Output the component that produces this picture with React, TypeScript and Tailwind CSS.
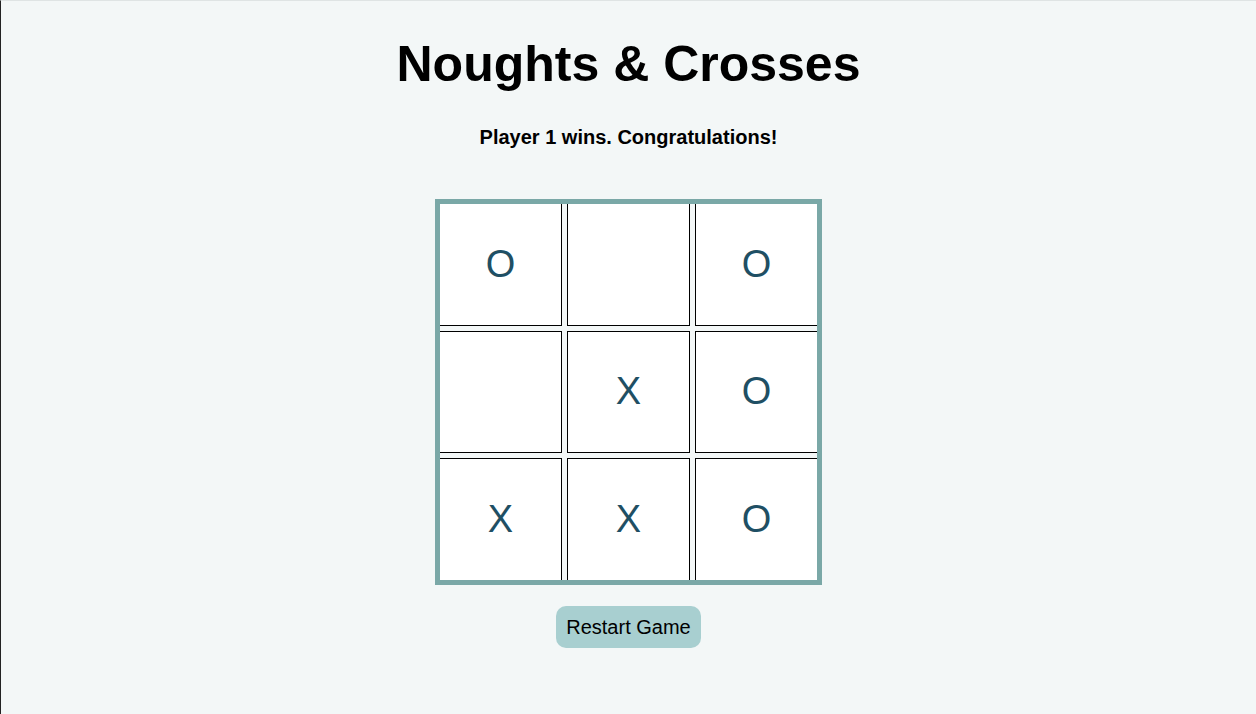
const board = ['O', '', 'O', '', 'X', 'O', 'X', 'X', 'O'];

export default function App() {
  return (
    <div
      className="min-h-screen bg-[#f3f7f7] border-l border-l-[#222222] border-t border-t-[#dfe4e4] flex flex-col items-center"
      style={{ fontFamily: '"Liberation Sans", Arial, sans-serif' }}
    >
      {/* Header */}
      <h1 className="mt-[38px] text-[50px] leading-none font-bold text-black">
        Noughts &amp; Crosses
      </h1>
      <p className="mt-[38px] text-[20px] leading-none font-bold text-black">
        Player 1 wins. Congratulations!
      </p>

      {/* Board */}
      <div className="mt-[52px] border-[5px] border-[#7aa8a7]">
        <div className="w-[377px] h-[376px] overflow-hidden">
          <div className="-mt-px -ml-px w-[379px] h-[378px] grid grid-cols-3 grid-rows-3 gap-[5px]">
            {board.map((cell, i) => (
              <div
                key={i}
                className="bg-white border border-black flex items-center justify-center text-[38px] text-[#1f4f64]"
              >
                {cell}
              </div>
            ))}
          </div>
        </div>
      </div>

      {/* Restart */}
      <button className="mt-[21px] px-[10px] py-[11px] rounded-[10px] bg-[#a8cfd0] text-[20px] leading-none text-black">
        Restart Game
      </button>
    </div>
  );
}
